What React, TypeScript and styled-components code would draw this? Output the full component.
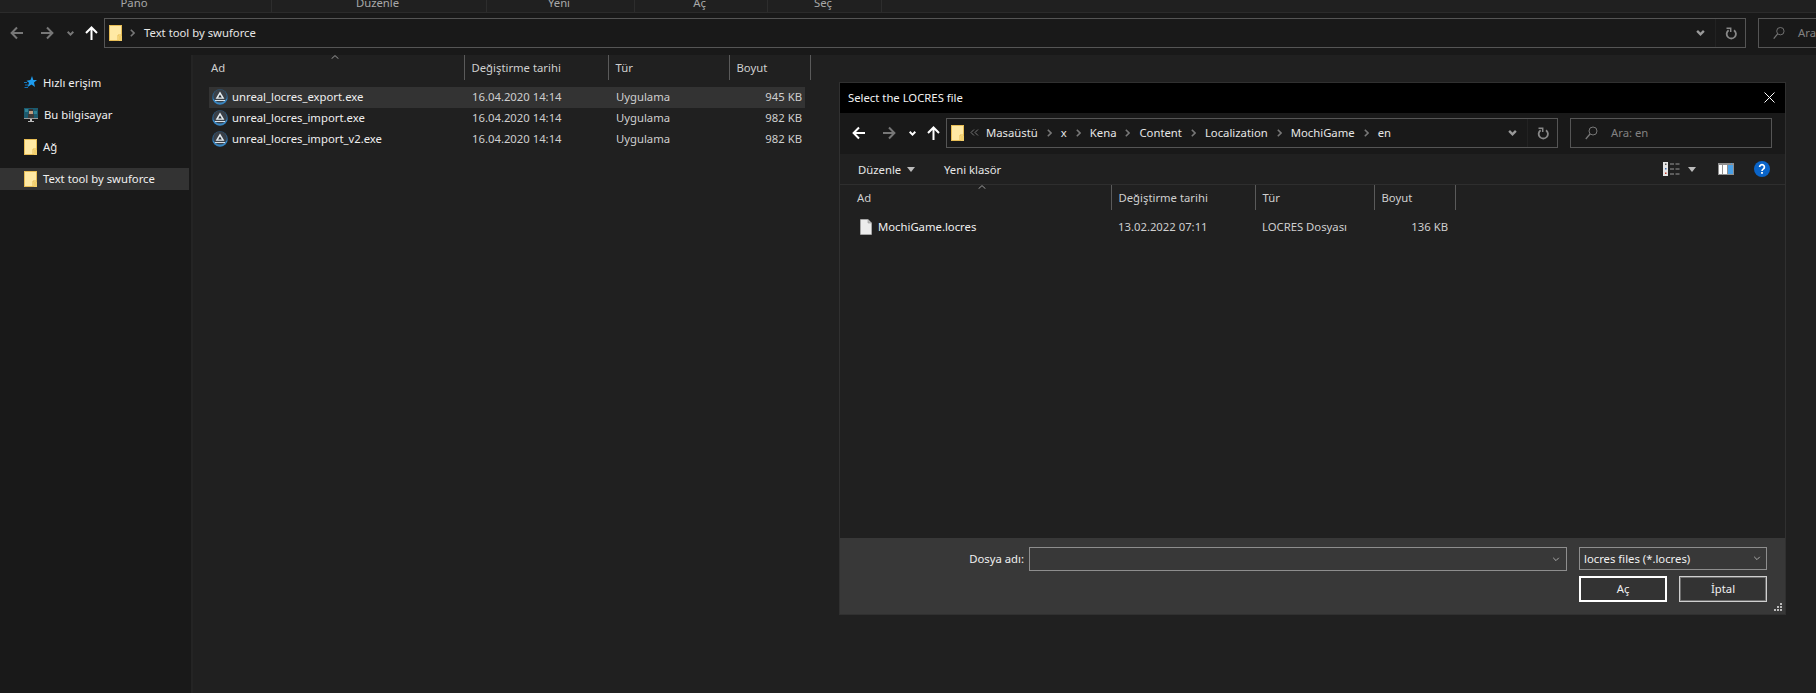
import * as React from 'react'
import styled, { createGlobalStyle } from 'styled-components'

const GlobalStyle = createGlobalStyle`
  html, body { margin: 0; padding: 0; background: #202020; }
  * { box-sizing: border-box; }
  body {
    font-family: "Noto Sans", "Open Sans", "Liberation Sans", sans-serif;
    font-size: 11.3px;
    color: #e4e4e4;
  }
`

const Page = styled.div`
  position: relative;
  width: 1816px;
  height: 693px;
  overflow: hidden;
  display: flex;
  flex-direction: column;
  background: #202020;
`

/* ribbon, only its bottom edge is visible */
const Ribbon = styled.div`
  flex: none;
  height: 13px;
  display: grid;
  grid-template-columns: 272px 215px 148px 133px 114px 1fr;
  background: #202020;
  border-bottom: 1px solid #2b2b2b;
`

const RibbonGroup = styled.div`
  height: 12px;
  display: flex;
  align-items: flex-end;
  justify-content: center;
  overflow: hidden;
  color: #a8a8a8;
  line-height: 16px;
  padding: 0 3px 1px 0;
  border-right: 1px solid #2d2d2d;
  &:last-child { border-right: none; }
`

const NavRow = styled.div`
  flex: none;
  display: flex;
  align-items: flex-start;
  background: #191919;
  gap: 12px;
`

const MainNav = styled(NavRow)`
  height: 42px;
  padding-top: 5px;
`

const DialogNav = styled(NavRow)`
  height: 41px;
  padding: 5px 13px 0 0;
`

const NavButtons = styled.div<{ $dialog?: boolean }>`
  flex: none;
  width: ${(p) => (p.$dialog ? 106 : 104)}px;
  height: 30px;
  margin-right: -12px;
  display: grid;
  grid-template-columns: ${(p) => (p.$dialog ? '38px 22px 24px 18px' : '34px 26px 20px 22px')};
  align-items: center;
  justify-items: center;
  color: #fff;
`

const NavSlot = styled.span<{ $dim?: boolean }>`
  display: flex;
  align-items: center;
  justify-content: center;
  color: ${(p) => (p.$dim ? '#777' : '#fff')};
`

const AddressBox = styled.div`
  flex: 1;
  min-width: 0;
  height: 30px;
  display: flex;
  align-items: center;
  border: 1px solid #555;
  background: #191919;
  padding-left: 4px;
`

const Crumbs = styled.div`
  flex: 1;
  display: flex;
  align-items: center;
  min-width: 0;
  color: #e6e6e6;
  padding-bottom: 1px;
`

const CrumbSep = styled.span`
  display: flex;
  align-items: center;
  justify-content: center;
  width: 23px;
  color: #777;
`

const FirstSep = styled(CrumbSep)`
  width: 20px;
  justify-content: flex-start;
  padding-left: 6px;
`

const CrumbFolder = styled.span`
  display: flex;
  margin-right: 2px;
`

const BackCrumb = styled.span`
  width: 20px;
  padding-left: 4px;
  color: #777;
  display: flex;
  align-items: center;
`

const DropArrow = styled.span`
  flex: none;
  width: 29px;
  display: flex;
  justify-content: center;
  color: #999;
`

const RefreshCell = styled.span`
  flex: none;
  width: 30px;
  height: 100%;
  display: flex;
  align-items: center;
  justify-content: center;
  border-left: 1px solid #222;
  color: #888;
`

const SearchBox = styled.div<{ $w: number; $open?: boolean }>`
  flex: none;
  width: ${(p) => p.$w}px;
  height: 30px;
  border: 1px solid #555;
  border-right: ${(p) => (p.$open ? 'none' : '1px solid #555')};
  background: #191919;
  display: flex;
  align-items: center;
  gap: 13px;
  padding: 0 0 1px 14px;
  color: #818181;
  white-space: nowrap;
  overflow: hidden;
`

const Body = styled.div`
  flex: 1;
  display: flex;
  min-height: 0;
`

const Sidebar = styled.nav`
  flex: none;
  width: 193px;
  padding: 17px 0 0 0;
  display: flex;
  flex-direction: column;
  gap: 10px;
  background: #191919;
  border-right: 2px solid #242424;
`

const SideItem = styled.div<{ $active?: boolean }>`
  width: 189px;
  height: 22px;
  display: flex;
  align-items: center;
  gap: 6px;
  padding: 0 0 1px 24px;
  color: #f0f0f0;
  background: ${(p) => (p.$active ? '#333' : 'transparent')};
`

const FileArea = styled.div<{ $dialog?: boolean }>`
  flex: 1;
  min-height: 0;
  background: #202020;
  padding-left: ${(p) => (p.$dialog ? 15 : 16)}px;
`

const Columns = styled.div<{ $cols: string; $h: number }>`
  display: grid;
  grid-template-columns: ${(p) => p.$cols};
  height: ${(p) => p.$h}px;
  align-items: center;
`

const HeaderCell = styled.div`
  position: relative;
  height: 100%;
  display: flex;
  align-items: center;
  padding: 0 0 1px 6.5px;
  border-right: 1px solid #5a5a5a;
  color: #cfcfcf;
`

const FirstHeader = styled(HeaderCell)`
  padding-left: 2px;
`

const SortChevron = styled.span<{ $x: number }>`
  position: absolute;
  top: 0;
  left: ${(p) => p.$x}px;
  display: flex;
  color: #999;
`

const FileList = styled.div<{ $top: number; $w: number; $row: number; $lift: number }>`
  width: ${(p) => p.$w}px;
  margin-top: ${(p) => p.$top}px;
  > div {
    height: ${(p) => p.$row}px;
    > div { padding-bottom: ${(p) => p.$lift}px; }
  }
`

const NameCell = styled.div<{ $pad: number; $gap: number }>`
  display: flex;
  align-items: center;
  gap: ${(p) => p.$gap}px;
  padding-left: ${(p) => p.$pad}px;
  color: #efefef;
`

const InfoCell = styled.div`
  padding-left: 7px;
  color: #cfcfcf;
`

const SizeCell = styled.div`
  text-align: right;
  padding-right: 3px;
  color: #cfcfcf;
`

const FileRow = styled(Columns)<{ $active?: boolean }>`
  background: ${(p) => (p.$active ? '#333' : 'transparent')};
`

const Dialog = styled.section`
  position: absolute;
  left: 839px;
  top: 82px;
  width: 947px;
  height: 533px;
  display: flex;
  flex-direction: column;
  border: 1px solid #303030;
  background: #202020;
`

const TitleBar = styled.header`
  flex: none;
  height: 30px;
  background: #000;
  color: #f2f2f2;
  display: flex;
  align-items: center;
  justify-content: space-between;
  padding: 0 10px 2px 8px;
`

const Toolbar = styled.div`
  flex: none;
  height: 31px;
  display: flex;
  align-items: center;
  padding: 0 15px 0 18px;
  background: #202020;
  border-bottom: 1px solid #2e2e2e;
  color: #e6e6e6;
`

const ToolButton = styled.span<{ $w: number }>`
  display: flex;
  align-items: center;
  gap: 6px;
  width: ${(p) => p.$w}px;
`

const ToolIcons = styled.div`
  margin-left: auto;
  display: flex;
  align-items: center;
`

const ToolIcon = styled.span<{ $w: number }>`
  display: flex;
  width: ${(p) => p.$w}px;
  justify-content: center;
`

const HelpSlot = styled(ToolIcon)`
  justify-content: flex-end;
`

const BottomPanel = styled.footer`
  position: relative;
  flex: none;
  height: 76px;
  background: #383838;
  padding: 9px 18px 0 0;
  display: grid;
  grid-template-columns: 1fr 550px 188px;
  grid-template-rows: 24px 26px;
  row-gap: 5px;
  color: #f0f0f0;
`

const FieldLabel = styled.label`
  align-self: center;
  justify-self: end;
  margin-right: 5px;
  padding-bottom: 1px;
`

const NameInput = styled.div`
  height: 24px;
  margin-right: 12px;
  border: 1px solid #8e8e8e;
  background: #383838;
  display: flex;
  align-items: center;
  justify-content: flex-end;
  padding-right: 6px;
  color: #aaa;
`

const TypeSelect = styled.div`
  height: 23px;
  border: 1px solid #8e8e8e;
  background: #383838;
  display: flex;
  align-items: center;
  justify-content: space-between;
  padding: 0 5px 1px 4px;
  color: #f0f0f0;
  > svg { color: #aaa; }
`

const Buttons = styled.div`
  grid-column: 3;
  display: flex;
  justify-content: space-between;
`

const DialogButton = styled.button<{ $primary?: boolean }>`
  width: 88px;
  height: 26px;
  padding: 0 0 1px;
  font: inherit;
  color: #f0f0f0;
  background: #333;
  border: ${(p) => (p.$primary ? '2px solid #fff' : '1px solid #cfcfcf')};
  box-shadow: ${(p) => (p.$primary ? 'none' : 'inset 0 0 0 1px #6e6e6e')};
`

const ResizeGrip = styled.span`
  position: absolute;
  right: 3px;
  bottom: 3px;
  display: flex;
  color: #bbb;
`

/* ---- drawings ---- */

const ArrowLeft = () => (
  <svg width="14" height="14" viewBox="0 0 14 14" fill="none" stroke="currentColor" strokeWidth="2">
    <path d="M13 7H2M7 1.5L1.6 7 7 12.5" />
  </svg>
)

const ArrowRight = () => (
  <svg width="14" height="14" viewBox="0 0 14 14" fill="none" stroke="currentColor" strokeWidth="2">
    <path d="M1 7h11M7 1.5L12.4 7 7 12.5" />
  </svg>
)

const ArrowUp = () => (
  <svg width="13" height="14" viewBox="0 0 13 14" fill="none" stroke="currentColor" strokeWidth="2">
    <path d="M6.5 14V2M1 7l5.5-5.5L12 7" />
  </svg>
)

const Chevron = ({ w = 7, h = 5, sw = 2 }: { w?: number; h?: number; sw?: number }) => (
  <svg width={w} height={h} viewBox="0 0 7 5" fill="none" stroke="currentColor" strokeWidth={sw}>
    <path d="M.7.8l2.8 2.8L6.3.8" />
  </svg>
)

const CrumbArrow = () => (
  <svg width="5" height="8" viewBox="0 0 5 8" fill="none" stroke="currentColor" strokeWidth="1.6">
    <path d="M.8.8L4 4 .8 7.2" />
  </svg>
)

const DoubleLeft = () => (
  <svg width="9" height="7" viewBox="0 0 9 7" fill="none" stroke="currentColor" strokeWidth="1">
    <path d="M4 .5L1 3.5 4 6.5M8 .5L5 3.5 8 6.5" />
  </svg>
)

const Refresh = () => (
  <svg width="12" height="13" viewBox="0 0 12 13" fill="none" stroke="currentColor" strokeWidth="1.8">
    <path d="M3.6 3.2A4.6 4.6 0 1 0 9 3.2" />
    <path d="M1.5 1.2h4.2v3.7" strokeWidth="1.5" />
  </svg>
)

const SearchGlass = () => (
  <svg width="13" height="14" viewBox="0 0 13 14" fill="none" stroke="#777" strokeWidth="1">
    <circle cx="8" cy="5" r="4" />
    <path d="M5 8L.8 13" strokeWidth="1.3" />
  </svg>
)

const FolderIcon = () => (
  <svg width="13" height="16" viewBox="0 0 13 16">
    <rect width="13" height="16" fill="#e7bd55" />
    <rect x="1" y="1" width="11" height="14" fill="#ffe9a4" />
    <path d="M9 15V10h3" fill="none" stroke="#e7bd55" />
    <rect x="10" y="11" width="3" height="5" fill="#f2cf6c" />
  </svg>
)

const AppIcon = () => (
  <svg width="16" height="16" viewBox="0 0 16 16">
    <circle cx="8" cy="8" r="7.8" fill="#2a5f8c" />
    <path d="M.4 8a7.6 7.6 0 0 0 15.2 0A7.6 4 0 0 1 .4 8z" fill="#3a86c0" />
    <circle cx="8" cy="7" r="6.6" fill="#3a4048" />
    <path d="M8 2.6l4.400 7.200H3.600z" fill="#e6ecf0" />
    <path d="M8 5.400l1.800 3H6.200z" fill="#2a3036" />
    <path d="M3 11.500h10" stroke="#d6dfe6" strokeWidth="1" />
  </svg>
)

const StarIcon = () => (
  <svg width="13" height="13" viewBox="0 0 13 13">
    <path d="M8 0l1.300 4H13l-3 2.600L11 11 7.500 8.400 3.600 11 5 6.800 2.500 4.800 6.500 4z" fill="#1d9cf0" />
    <path d="M0 6.500h3M1 9h3M.5 11.500h3.500" stroke="#1673b8" strokeWidth="1" />
  </svg>
)

const PcIcon = () => (
  <svg width="14" height="14" viewBox="0 0 14 14">
    <rect width="14" height="10" fill="#1c5a6e" />
    <rect x="1" y="1" width="3" height="3" fill="#2f8295" />
    <rect x="10" y="3" width="3" height="3" fill="#2f8295" />
    <rect x="5" y="1" width="4" height="3" fill="#3b3130" />
    <rect x="5" y="3" width="4" height="3" fill="#c09a7e" />
    <rect x="4" y="6" width="6" height="4" fill="#3a3a3a" />
    <rect x="0" y="10" width="14" height="1" fill="#9a9a9a" />
    <rect x="6" y="11" width="2" height="2" fill="#bdbdbd" />
    <rect x="4" y="13" width="6" height="1" fill="#bdbdbd" />
  </svg>
)

const PageIcon = () => (
  <svg width="12" height="16" viewBox="0 0 12 16">
    <path d="M.5.5H8L11.500 4v11.500H.5z" fill="#ececec" stroke="#bbb" strokeWidth=".6" />
    <path d="M8 .5V4h3.500" fill="#bdbdbd" stroke="#999" strokeWidth=".6" />
  </svg>
)

const ViewIcon = () => (
  <svg width="17" height="14" viewBox="0 0 17 14">
    <rect width="5" height="14" fill="#e4e4e4" />
    <rect x="2" y="1.5" width="1.5" height="1.5" fill="#555" />
    <rect x="2" y="6" width="1.5" height="1.5" fill="#3f6fb5" />
    <rect x="2" y="10.5" width="1.5" height="1.5" fill="#c0392b" />
    <path d="M7 2h4M12.500 2h4M7 7h4M12.500 7h4M7 12h4M12.500 12h4" stroke="#999" strokeWidth="1" />
  </svg>
)

const PaneIcon = () => (
  <svg width="16" height="12" viewBox="0 0 16 12">
    <rect width="16" height="12" fill="#8f8f8f" />
    <rect x="1" y="2" width="3" height="9" fill="#fff" />
    <rect x="5" y="2" width="4" height="9" fill="#fff" />
    <rect x="10" y="2" width="5" height="9" fill="#4aa0e6" />
    <rect x="13" y="0" width="1" height="1" fill="#4aa0e6" />
  </svg>
)

const HelpIcon = () => (
  <svg width="16" height="16" viewBox="0 0 16 16">
    <circle cx="8" cy="8" r="8" fill="#0a64c8" />
    <path d="M5.6 6a2.4 2.4 0 1 1 3.6 2.100C8.400 8.600 8 9 8 10" fill="none" stroke="#fff" strokeWidth="1.7" />
    <rect x="7.1" y="11" width="1.8" height="1.8" fill="#fff" />
  </svg>
)

const Caret = () => (
  <svg width="8" height="5" viewBox="0 0 8 5">
    <path d="M0 0h8L4 5z" fill="#bcbcbc" />
  </svg>
)

const CloseIcon = () => (
  <svg width="11" height="11" viewBox="0 0 11 11" stroke="#fff" strokeWidth="1">
    <path d="M.5.5l10 10M10.500.5l-10 10" />
  </svg>
)

const GripIcon = () => (
  <svg width="8" height="8" viewBox="0 0 8 8" fill="currentColor">
    <rect x="6" y="0" width="2" height="2" />
    <rect x="3" y="3" width="2" height="2" />
    <rect x="6" y="3" width="2" height="2" />
    <rect x="0" y="6" width="2" height="2" />
    <rect x="3" y="6" width="2" height="2" />
    <rect x="6" y="6" width="2" height="2" />
  </svg>
)

const SortUp = () => (
  <svg width="8" height="4" viewBox="0 0 8 4" fill="none" stroke="currentColor">
    <path d="M.5 3.800L4 .6l3.500 3.200" />
  </svg>
)

/* ---- pieces ---- */

const NavArrows = ({ dialog }: { dialog?: boolean }) => (
  <NavButtons $dialog={dialog}>
    <NavSlot $dim={!dialog}><ArrowLeft /></NavSlot>
    <NavSlot $dim><ArrowRight /></NavSlot>
    <NavSlot $dim={!dialog}><Chevron /></NavSlot>
    <NavSlot><ArrowUp /></NavSlot>
  </NavButtons>
)

const mainCols = '256px 144px 121px 81px'
const mainRowCols = '256px 144px 121px 75px'
const dialogCols = '257px 144px 119px 81px'

const mainFiles = [
  { name: 'unreal_locres_export.exe', size: '945 KB' },
  { name: 'unreal_locres_import.exe', size: '982 KB' },
  { name: 'unreal_locres_import_v2.exe', size: '982 KB' },
]

const dialogPath = ['Masaüstü', 'x', 'Kena', 'Content', 'Localization', 'MochiGame', 'en']

export default function App() {
  return (
    <Page>
      <GlobalStyle />
      <Ribbon>
        <RibbonGroup>Pano</RibbonGroup>
        <RibbonGroup>Düzenle</RibbonGroup>
        <RibbonGroup>Yeni</RibbonGroup>
        <RibbonGroup>Aç</RibbonGroup>
        <RibbonGroup>Seç</RibbonGroup>
        <RibbonGroup />
      </Ribbon>
      <MainNav>
        <NavArrows />
        <AddressBox>
          <Crumbs>
            <CrumbFolder><FolderIcon /></CrumbFolder>
            <FirstSep><CrumbArrow /></FirstSep>
            Text tool by swuforce
          </Crumbs>
          <DropArrow><Chevron w={9} h={6} /></DropArrow>
          <RefreshCell><Refresh /></RefreshCell>
        </AddressBox>
        <SearchBox $w={58} $open><SearchGlass />Ara</SearchBox>
      </MainNav>
      <Body>
        <Sidebar>
          <SideItem><StarIcon />Hızlı erişim</SideItem>
          <SideItem><PcIcon />Bu bilgisayar</SideItem>
          <SideItem><FolderIcon />Ağ</SideItem>
          <SideItem $active><FolderIcon />Text tool by swuforce</SideItem>
        </Sidebar>
        <FileArea>
          <Columns $cols={mainCols} $h={25}>
            <FirstHeader>Ad<SortChevron $x={122}><SortUp /></SortChevron></FirstHeader>
            <HeaderCell>Değiştirme tarihi</HeaderCell>
            <HeaderCell>Tür</HeaderCell>
            <HeaderCell>Boyut</HeaderCell>
          </Columns>
          <FileList $top={7} $w={596} $row={21} $lift={2}>
            {mainFiles.map((f, i) => (
              <FileRow key={f.name} $cols={mainRowCols} $h={21} $active={i === 0}>
                <NameCell $pad={3} $gap={4}><AppIcon />{f.name}</NameCell>
                <InfoCell>16.04.2020 14:14</InfoCell>
                <InfoCell>Uygulama</InfoCell>
                <SizeCell>{f.size}</SizeCell>
              </FileRow>
            ))}
          </FileList>
        </FileArea>
      </Body>

      <Dialog>
        <TitleBar>
          Select the LOCRES file
          <CloseIcon />
        </TitleBar>
        <DialogNav>
          <NavArrows dialog />
          <AddressBox>
            <Crumbs>
              <CrumbFolder><FolderIcon /></CrumbFolder>
              <BackCrumb><DoubleLeft /></BackCrumb>
              {dialogPath.map((p, i) => (
                <React.Fragment key={p}>
                  {i > 0 && <CrumbSep><CrumbArrow /></CrumbSep>}
                  {p}
                </React.Fragment>
              ))}
            </Crumbs>
            <DropArrow><Chevron w={9} h={6} /></DropArrow>
            <RefreshCell><Refresh /></RefreshCell>
          </AddressBox>
          <SearchBox $w={202}><SearchGlass />Ara: en</SearchBox>
        </DialogNav>
        <Toolbar>
          <ToolButton $w={86}>Düzenle <Caret /></ToolButton>
          <ToolButton $w={70}>Yeni klasör</ToolButton>
          <ToolIcons>
            <ToolIcon $w={17}><ViewIcon /></ToolIcon>
            <ToolIcon $w={24}><Caret /></ToolIcon>
            <ToolIcon $w={44}><PaneIcon /></ToolIcon>
            <HelpSlot $w={22}><HelpIcon /></HelpSlot>
          </ToolIcons>
        </Toolbar>
        <FileArea $dialog>
          <Columns $cols={dialogCols} $h={25}>
            <FirstHeader>Ad<SortChevron $x={123}><SortUp /></SortChevron></FirstHeader>
            <HeaderCell>Değiştirme tarihi</HeaderCell>
            <HeaderCell>Tür</HeaderCell>
            <HeaderCell>Boyut</HeaderCell>
          </Columns>
          <FileList $top={6} $w={596} $row={22} $lift={1}>
            <FileRow $cols="256px 144px 120px 76px" $h={22}>
              <NameCell $pad={5} $gap={6}><PageIcon />MochiGame.locres</NameCell>
              <InfoCell>13.02.2022 07:11</InfoCell>
              <InfoCell>LOCRES Dosyası</InfoCell>
              <SizeCell>136 KB</SizeCell>
            </FileRow>
          </FileList>
        </FileArea>
        <BottomPanel>
          <FieldLabel>Dosya adı:</FieldLabel>
          <NameInput><Chevron w={8} h={5} sw={1} /></NameInput>
          <TypeSelect>locres files (*.locres)<Chevron w={8} h={5} sw={1} /></TypeSelect>
          <Buttons>
            <DialogButton $primary>Aç</DialogButton>
            <DialogButton>İptal</DialogButton>
          </Buttons>
          <ResizeGrip><GripIcon /></ResizeGrip>
        </BottomPanel>
      </Dialog>
    </Page>
  )
}
